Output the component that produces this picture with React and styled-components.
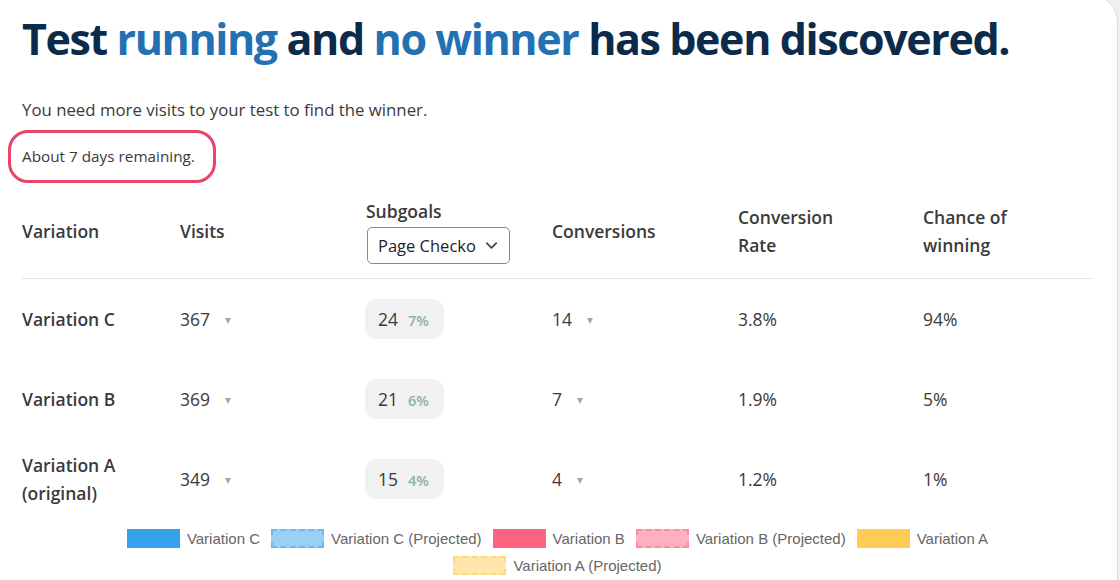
import React from "react";
import styled, { createGlobalStyle } from "styled-components";
import { ChevronDown } from "lucide-react";

const GlobalStyle = createGlobalStyle`
  html, body {
    margin: 0;
    background: #efefef;
    overflow: hidden;
  }
  body {
    font-family: "Open Sans", "Noto Sans", sans-serif;
    color: #333;
  }
`;

const Card = styled.div`
  margin: -6px 0 0 -12px;
  width: 1130px;
  height: 600px;
  box-sizing: border-box;
  background: #fff;
  border: 1px solid #d9d9d9;
  border-radius: 0 28px 0 0;
  padding: 12px 26px 0 33px;
`;

const Title = styled.h1`
  margin: 0;
  white-space: nowrap;
  font-size: 43px;
  font-weight: 700;
  letter-spacing: -1.4px;
  line-height: 64px;
  color: #0c2b4b;

  em {
    font-style: normal;
    color: #2371b3;
  }
`;

const Lead = styled.p`
  margin: 28px 0 0;
  font-size: 16.8px;
  line-height: 22px;
  color: #3a3a3a;
`;

const Remaining = styled.p`
  display: inline-block;
  margin: 9px 0 0 -14px;
  padding: 13px 18px 13px 11px;
  border: 3px solid #e94469;
  border-radius: 20px;
  font-size: 15.3px;
  line-height: 21px;
  color: #3a3a3a;
`;

const Table = styled.div`
  width: 1071px;
  margin-top: 9px;
`;

const Row = styled.div`
  display: grid;
  grid-template-columns: 158px 186px 186px 186px 185px 1fr;
  align-items: center;
  box-sizing: border-box;
  height: ${(p) => p.$h}px;
  padding-bottom: ${(p) => (p.$divider ? "9px" : "0")};
  border-bottom: ${(p) => (p.$divider ? "1px solid #e3e3e3" : "none")};
`;

const HeadCell = styled.div`
  font-size: 17.5px;
  font-weight: 600;
  line-height: 28px;
  color: #3a3a3a;
`;

const Subgoals = styled.div`
  display: flex;
  flex-direction: column;
  align-items: flex-start;
  gap: 2px;
`;

const Select = styled.div`
  display: flex;
  align-items: center;
  justify-content: space-between;
  box-sizing: border-box;
  width: 143px;
  height: 37px;
  margin-left: 1px;
  padding: 0 8px 0 10px;
  border: 1px solid #8a8a8a;
  border-radius: 5px;
  font-size: 16.5px;
  font-weight: 400;
  color: #222;

  svg {
    color: #444;
  }
`;

const Name = styled.div`
  font-size: 17.5px;
  font-weight: 600;
  line-height: 28px;
  color: #3a3a3a;
`;

const Value = styled.div`
  display: flex;
  align-items: center;
  gap: 15px;
  font-size: 17.5px;
  color: #3a3a3a;
`;

const Caret = styled.span`
  width: 0;
  height: 0;
  margin-top: 3px;
  border-left: 3.5px solid transparent;
  border-right: 3.5px solid transparent;
  border-top: 6px solid #8cb0b2;
`;

const Pill = styled.div`
  display: inline-flex;
  align-items: baseline;
  gap: 10px;
  height: 40px;
  box-sizing: border-box;
  padding: 8px 15px 0 13px;
  margin-left: -1px;
  width: fit-content;
  background: #f1f1f1;
  border-radius: 12px;
  font-size: 17.5px;
  color: #3a3a3a;

  small {
    font-size: 14.5px;
    font-weight: 600;
    color: #8cb0b2;
  }
`;

const Legend = styled.div`
  display: flex;
  flex-wrap: wrap;
  justify-content: center;
  column-gap: 11px;
  row-gap: 4px;
  width: 900px;
  margin: 8px auto 0;
  padding-left: 2px;
  font-family: "Liberation Sans", Arial, sans-serif;
  font-size: 15px;
  color: #666;
`;

const LegendItem = styled.div`
  display: flex;
  align-items: center;
  gap: 7px;
  height: 23px;
`;

const Swatch = styled.span`
  width: 53px;
  height: 19px;
  box-sizing: border-box;
  background: ${(p) => p.$fill};
  border: ${(p) => (p.$dashed ? `2px dashed ${p.$line}` : "none")};
`;

const rows = [
  { name: "Variation C", visits: 367, sub: 24, subPct: "7%", conv: 14, rate: "3.8%", chance: "94%" },
  { name: "Variation B", visits: 369, sub: 21, subPct: "6%", conv: 7, rate: "1.9%", chance: "5%" },
  { name: ["Variation A", "(original)"], visits: 349, sub: 15, subPct: "4%", conv: 4, rate: "1.2%", chance: "1%" },
];

const legend = [
  { label: "Variation C", fill: "#36a2eb" },
  { label: "Variation C (Projected)", fill: "#9ad0f5", line: "#6cb9f0", dashed: true },
  { label: "Variation B", fill: "#ff6384" },
  { label: "Variation B (Projected)", fill: "#ffb1c1", line: "#ff8aa3", dashed: true },
  { label: "Variation A", fill: "#ffcd56" },
  { label: "Variation A (Projected)", fill: "#ffe6aa", line: "#ffd77f", dashed: true },
];

export default function App() {
  return (
    <>
      <GlobalStyle />
      <Card>
        <Title>
          Test <em>running</em> and <em>no winner</em> has been discovered.
        </Title>
        <Lead>You need more visits to your test to find the winner.</Lead>
        <Remaining>About 7 days remaining.</Remaining>

        <Table>
          <Row $h={87} $divider>
            <HeadCell>Variation</HeadCell>
            <HeadCell>Visits</HeadCell>
            <Subgoals>
              <HeadCell>Subgoals</HeadCell>
              <Select>
                Page Checko <ChevronDown size={19} strokeWidth={2.2} />
              </Select>
            </Subgoals>
            <HeadCell>Conversions</HeadCell>
            <HeadCell>
              Conversion
              <br />
              Rate
            </HeadCell>
            <HeadCell>
              Chance of
              <br />
              winning
            </HeadCell>
          </Row>
          {rows.map((r, i) => (
            <Row key={i} $h={80}>
              <Name>
                {Array.isArray(r.name) ? (
                  <>
                    {r.name[0]}
                    <br />
                    {r.name[1]}
                  </>
                ) : (
                  r.name
                )}
              </Name>
              <Value>
                {r.visits} <Caret />
              </Value>
              <div>
                <Pill>
                  {r.sub} <small>{r.subPct}</small>
                </Pill>
              </div>
              <Value>
                {r.conv} <Caret />
              </Value>
              <Value>{r.rate}</Value>
              <Value>{r.chance}</Value>
            </Row>
          ))}
        </Table>

        <Legend>
          {legend.map((l) => (
            <LegendItem key={l.label}>
              <Swatch $fill={l.fill} $line={l.line} $dashed={l.dashed} />
              {l.label}
            </LegendItem>
          ))}
        </Legend>
      </Card>
    </>
  );
}
